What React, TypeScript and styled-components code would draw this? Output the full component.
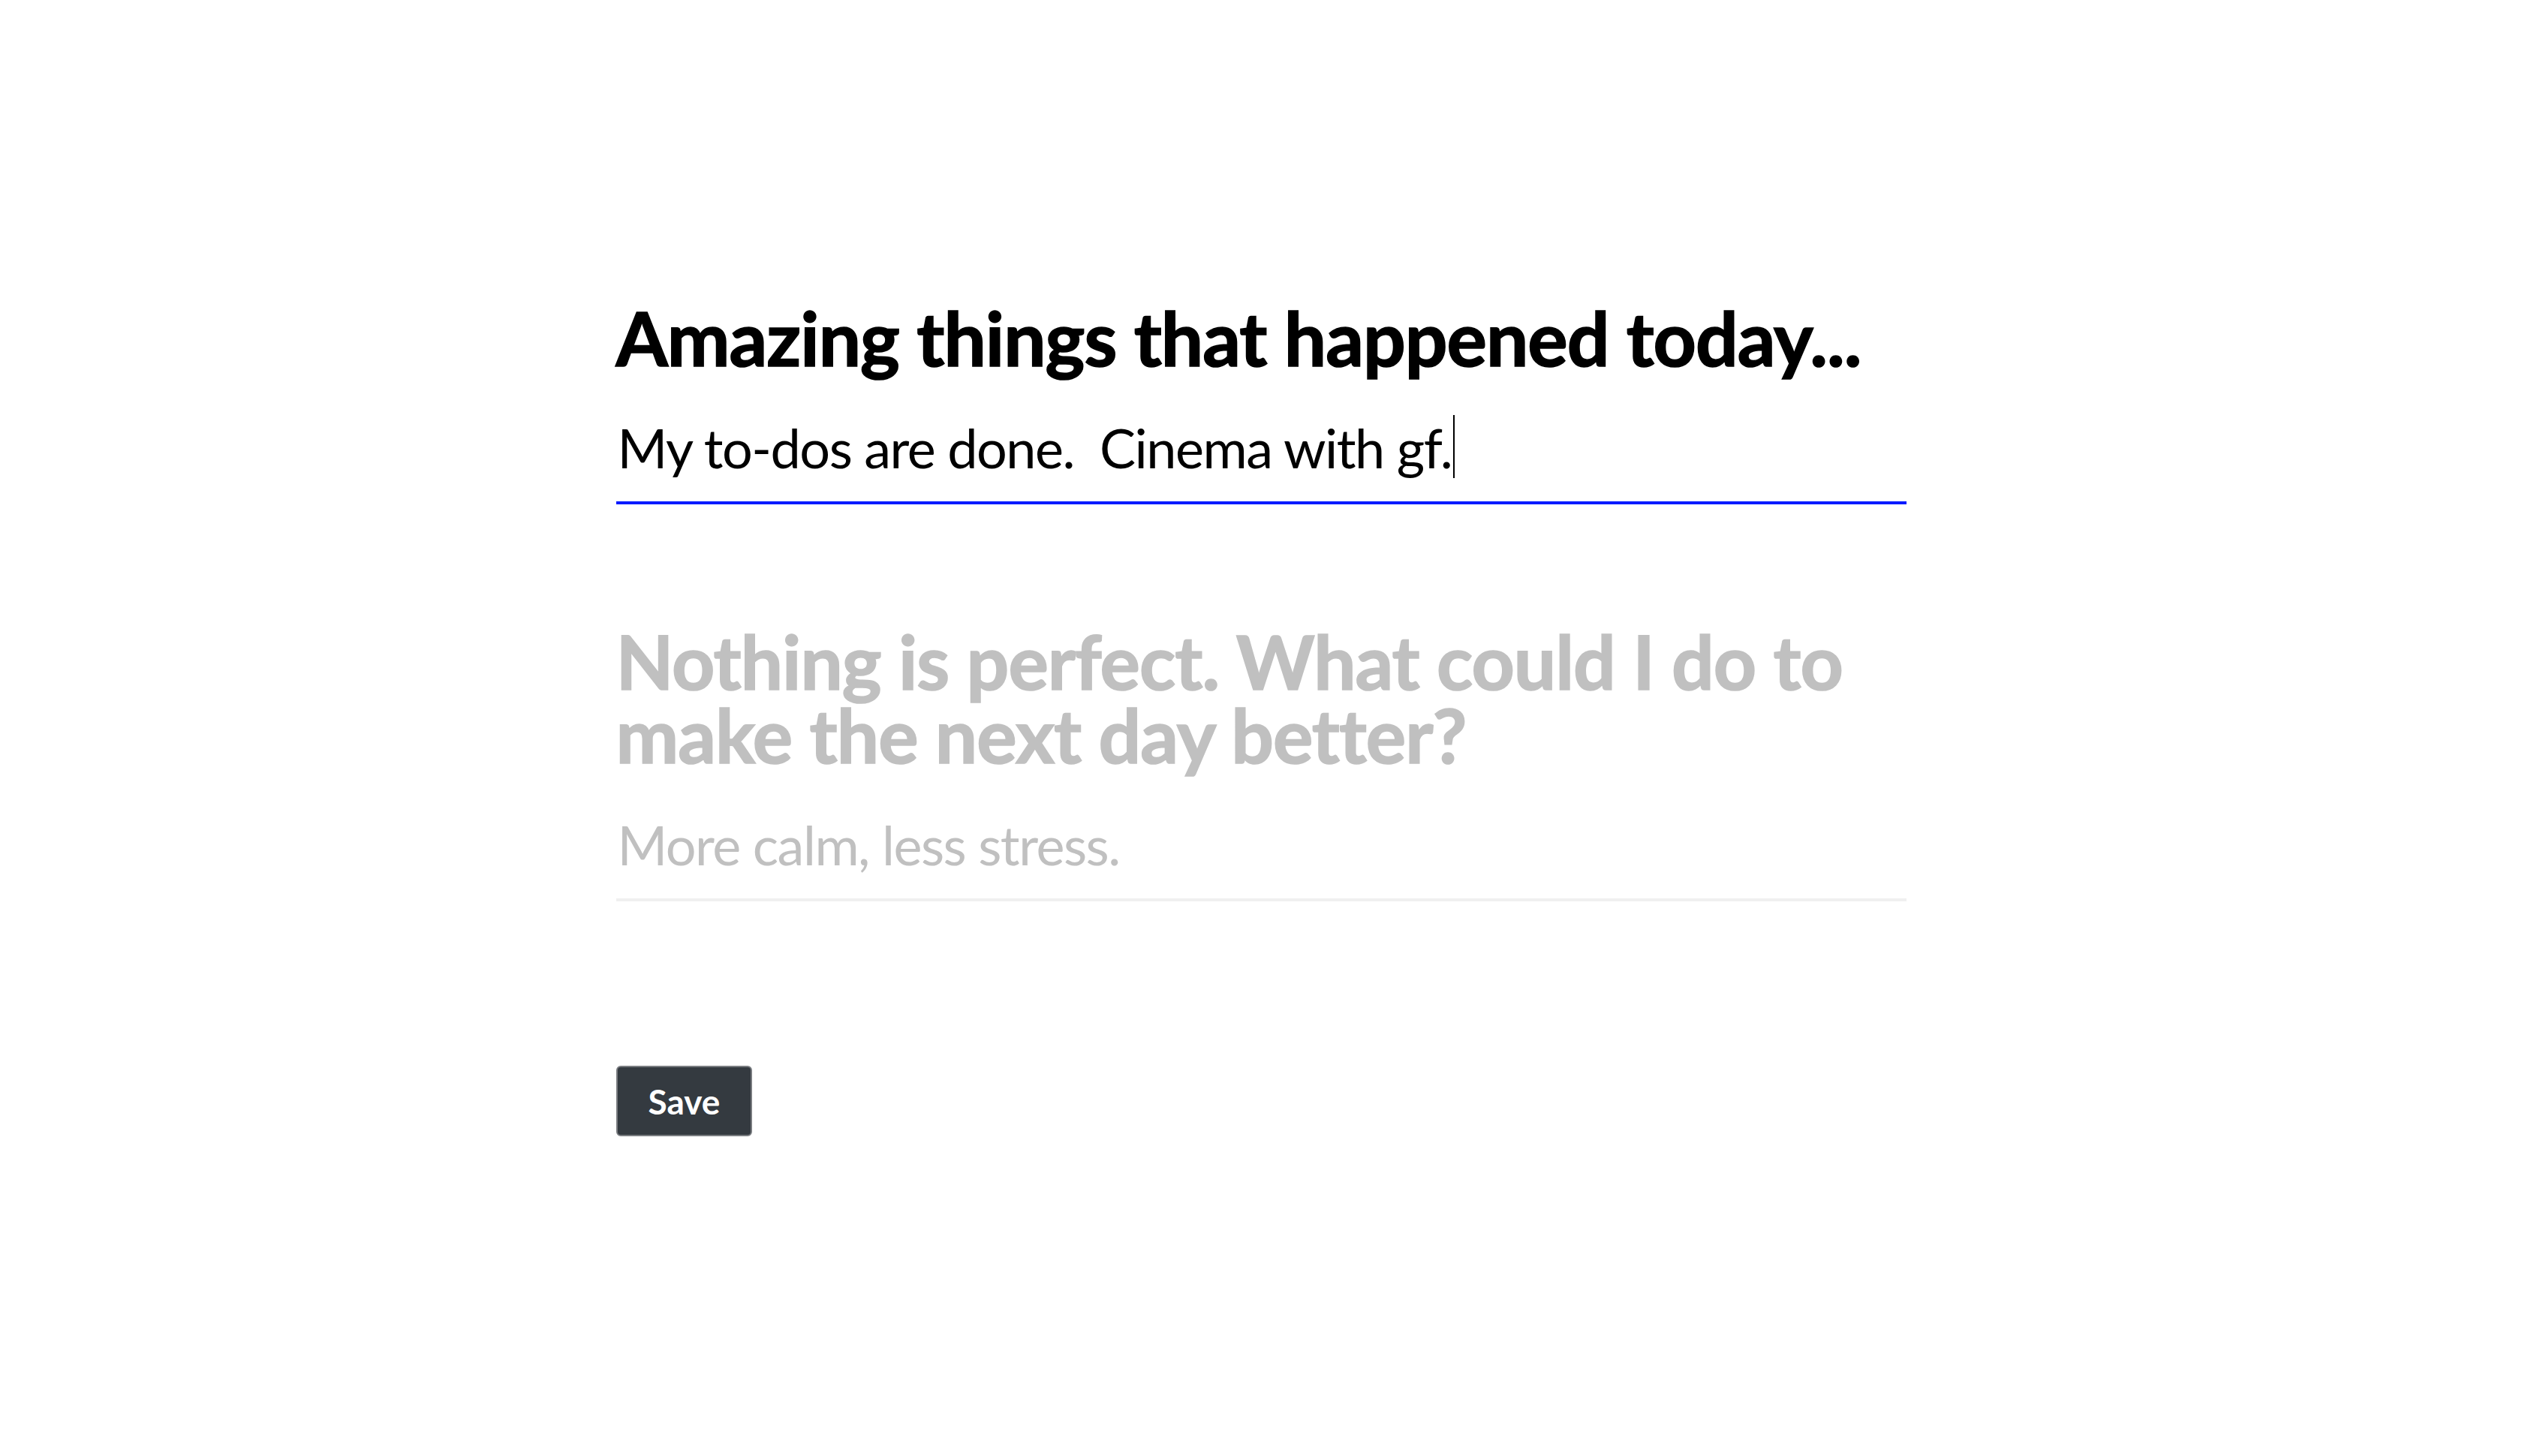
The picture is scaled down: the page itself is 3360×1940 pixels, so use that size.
import styled, { createGlobalStyle } from 'styled-components'

interface Prompt {
  question: string;
  answer: string;
  active: boolean;
}

const prompts: Prompt[] = [
  { question: 'Amazing things that happened today...', answer: 'My to-dos are done.  Cinema with gf.', active: true },
  { question: 'Nothing is perfect. What could I do to make the next day better?', answer: 'More calm, less stress.', active: false },
]

const App = () => {
  return (
    <>
      <GlobalStyle />
      <Page>
        <JournalForm onSubmit={e => e.preventDefault()}>
          {prompts.map(prompt => (
            <PromptSection key={prompt.question}>
              <Question $muted={!prompt.active}>{prompt.question}</Question>
              <Entry role="textbox" $active={prompt.active}>
                {prompt.answer}
                {prompt.active ? <Caret /> : null}
              </Entry>
            </PromptSection>
          ))}
          <Actions>
            <SaveButton type="submit">Save</SaveButton>
          </Actions>
        </JournalForm>
      </Page>
    </>
  )
}

export default App

const GlobalStyle = createGlobalStyle`
  html, body {
    margin: 0;
    padding: 0;
    background: #ffffff;
  }
  body {
    font-family: Lato, 'Open Sans', sans-serif;
  }
`

const Page = styled.main`
  padding-top: 400px;
`

const JournalForm = styled.form`
  display: flex;
  flex-direction: column;
  width: 1719px;
  margin: 0 auto;
`

const PromptSection = styled.section`
  display: flex;
  flex-direction: column;

  & + & {
    margin-top: 159px;
  }
`

interface QuestionProps {
  $muted: boolean;
}

const Question = styled.h2<QuestionProps>`
  margin: 0;
  font-family: Lato, sans-serif;
  font-weight: 700;
  font-size: 100px;
  line-height: 98px;
  letter-spacing: -1px;
  color: ${props => props.$muted ? '#c0c0c0' : '#000000'};
  -webkit-text-stroke: 1.6px ${props => props.$muted ? '#c0c0c0' : '#000000'};
`

interface EntryProps {
  $active: boolean;
}

const Entry = styled.div<EntryProps>`
  margin-top: 40px;
  padding: 15px 0 29px 2px;
  font-family: Lato, sans-serif;
  font-weight: 400;
  font-size: 72px;
  line-height: 86px;
  letter-spacing: -1.5px;
  white-space: pre;
  color: ${props => props.$active ? '#000000' : '#c0c0c0'};
  border-bottom: 4px solid ${props => props.$active ? '#001aff' : '#f0f0f0'};
`

const Caret = styled.span`
  display: inline-block;
  width: 2px;
  height: 84px;
  margin-left: 2px;
  vertical-align: top;
  background: #000000;
`

const Actions = styled.div`
  display: flex;
  margin-top: 219px;
`

const SaveButton = styled.button`
  display: inline-flex;
  align-items: center;
  justify-content: center;
  height: 94px;
  padding: 0 41px;
  font-family: Lato, sans-serif;
  font-weight: 700;
  font-size: 46px;
  color: #ffffff;
  background: #343a40;
  border: 2px solid #797c80;
  border-radius: 6px;
  cursor: pointer;
`
